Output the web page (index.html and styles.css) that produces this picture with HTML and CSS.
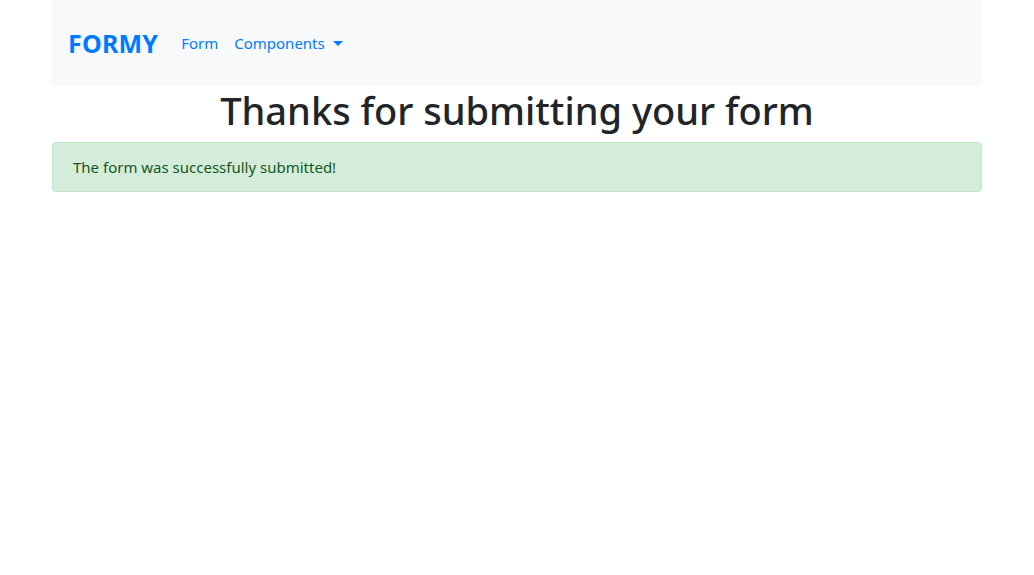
FILE: index.html
```html
<!DOCTYPE html>
<html lang="en">
<head>
<meta charset="utf-8">
<title>Formy</title>
<link rel="stylesheet" href="styles.css">
</head>
<body>
<div class="container">
  <nav class="navbar">
    <a class="brand" href="#">FORMY</a>
    <ul class="nav">
      <li><a class="nav-link" href="#">Form</a></li>
      <li><a class="nav-link dropdown" href="#">Components<span class="caret"></span></a></li>
    </ul>
  </nav>
  <h1 class="title">Thanks for submitting your form</h1>
  <div class="alert">The form was successfully submitted!</div>
</div>
</body>
</html>
```

FILE: styles.css
```css
* { box-sizing: border-box; }
html, body {
  margin: 0;
  background: #fff;
  font-family: "Noto Sans", "Open Sans", "Liberation Sans", sans-serif;
  font-size: 16px;
  line-height: 1.5;
  color: #212529;
}
.container {
  max-width: 960px;
  margin: 0 auto;
  padding: 0 15px;
}
.navbar {
  display: flex;
  align-items: center;
  min-height: 86px;
  padding: 8px 16px;
  background: #f8f9fa;
}
.brand {
  font-size: 25px;
  font-weight: 700;
  color: #007bff;
  text-decoration: none;
  line-height: 36px;
  margin-right: 15px;
  letter-spacing: 0.2px;
}
.nav {
  display: flex;
  list-style: none;
  margin: 0;
  padding: 0;
}
.nav-link {
  display: flex;
  align-items: center;
  padding: 8px 8px;
  color: #007bff;
  text-decoration: none;
  font-size: 15px;
}
.caret {
  display: inline-block;
  margin-left: 8px;
  width: 0;
  height: 0;
  border-top: 5px solid #007bff;
  border-left: 5px solid transparent;
  border-right: 5px solid transparent;
}
.title {
  margin: 0 0 8px;
  font-size: 38px;
  font-weight: 500;
  line-height: 48px;
  text-align: center;
  color: #212529;
}
.alert {
  padding: 12px 20px;
  background: #d4edda;
  border: 1px solid #c3e6cb;
  border-radius: 4px;
  color: #155724;
  font-size: 15px;
  line-height: 24px;
}
```
